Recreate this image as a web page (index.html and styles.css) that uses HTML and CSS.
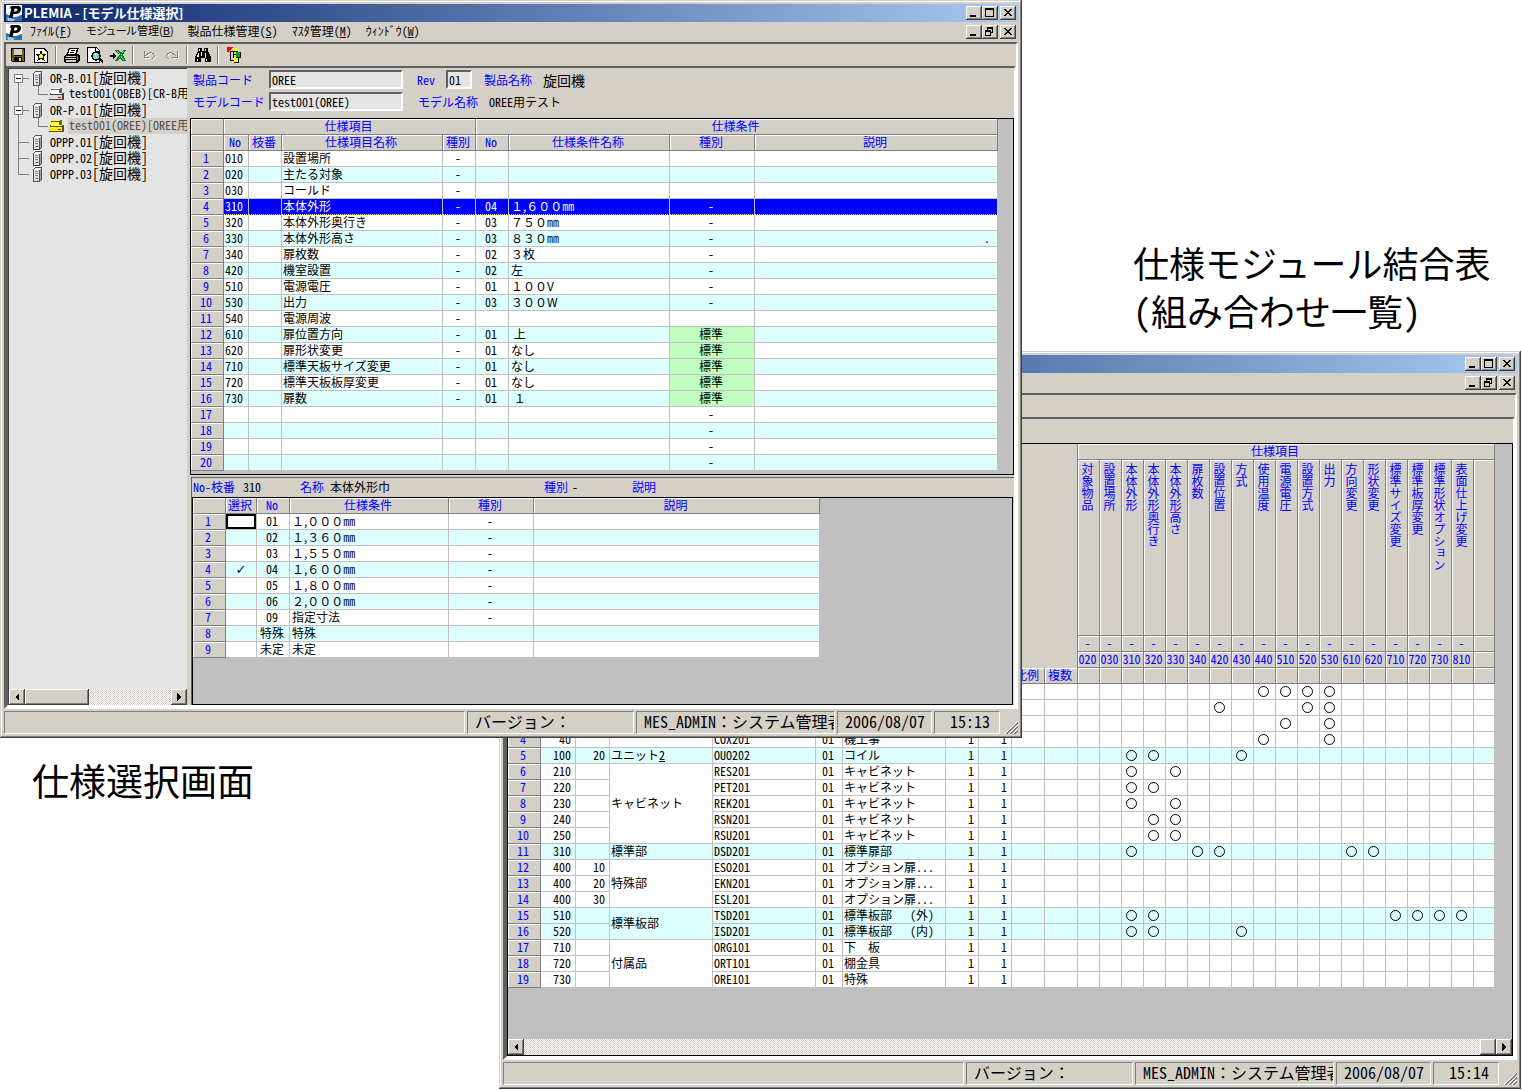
FILE: index.html
```html
<!DOCTYPE html>
<html lang="ja">
<head>
<meta charset="utf-8">
<title>PLEMIA</title>
<link rel="stylesheet" href="styles.css">
</head>
<body>
<svg class="defs" aria-hidden="true">
  <symbol id="i-logo" viewBox="0 0 16 16">
    <rect width="16" height="16" fill="#fff"/>
    <path d="M0 9c3 0 4 3 8 3s6-2 8-2v6H0z" fill="#2f6fa8"/>
    <path d="M1 13c3-2 5 2 9 1l-3 2H2z" fill="#9cc9e8"/>
    <path d="M5 1h6.500c3 0 4 2 3.300 4.500S12 9 9.500 9H7.500l-1 4H3L5.300 3.500H3.500zM8.600 3.500L7.900 6.500H9.500c2.200 0 2.700-3 .6-3z" fill="#000" fill-rule="evenodd"/>
  </symbol>
  <symbol id="i-min" viewBox="0 0 12 10"><path d="M2 7h6v2H2z"/></symbol>
  <symbol id="i-max" viewBox="0 0 12 10"><path d="M1 0h9v9H1zM2 2v6h7V2z" fill-rule="evenodd"/></symbol>
  <symbol id="i-restore" viewBox="0 0 12 10"><path d="M3 0h6v6H7v3H1V3h2zM4 2v1h3v2h1V2zM2 5v3h4V5z" fill-rule="evenodd"/></symbol>
  <symbol id="i-close" viewBox="0 0 12 10"><path d="M2 1h2v1h1v1h2V2h1V1h2v1H9v1H8v1H7v1h1v1h1v1h1v1H8V7H7V6H5v1H4v1H2V7h1V6h1V5h1V4H4V3H3V2H2z"/></symbol>
  <symbol id="i-save" viewBox="0 0 16 16">
    <path d="M1 1h14v14H2l-1-1z" fill="#000"/><path d="M2 2h2v7h8V2h2v12H2z" fill="#6b6b00"/><path d="M4 2h8v6H4z" fill="#d4d0c8"/><path d="M4 10h8v5H4z" fill="#000"/><path d="M9 11h2v3H9z" fill="#d4d0c8"/>
  </symbol>
  <symbol id="i-star" viewBox="0 0 16 16">
    <path d="M1 1h10l4 4v11H1z" fill="#000"/><path d="M2 2h8v4h4v9H2z" fill="#fff"/><path d="M10 2l4 4h-4z" fill="#fff"/>
    <path d="M8 4l1 3h4l-3 2 1 4-3-2-3 2 1-4-3-2h4z" fill="#ff0" stroke="#000" stroke-width="1"/>
  </symbol>
  <symbol id="i-print" viewBox="0 0 16 16">
    <path d="M5 1h10l-2 6h2v1l1 1v4l-3 3H1l-1-1V9l3-3z" fill="#000"/><path d="M6 2h7l-2 5H4z" fill="#fff"/><path d="M7 3h4v1H6zM6 5h4v1H5z" fill="#000"/><path d="M2 9h10v1H2zM1 11h11v1H1zM2 13h10v2H2z" fill="#d4d0c8"/><path d="M7 11h3v1H7z" fill="#ff0"/><path d="M13 9h1v4h-1z" fill="#888"/>
  </symbol>
  <symbol id="i-preview" viewBox="0 0 16 16">
    <path d="M0 0h9l4 4v12H0z" fill="#000"/><path d="M1 1h7v4h4v10H1z" fill="#fff"/><path d="M9 1v3h3z" fill="#fff"/><circle cx="9" cy="9" r="4" fill="#7fd8d8" stroke="#000" stroke-width="1.500"/><path d="M8 6h2l-2 3z" fill="#fff"/><path d="M11 11l1-1 4 4v2h-1z" fill="#000"/>
  </symbol>
  <symbol id="i-excel" viewBox="0 0 16 16">
    <path d="M0 8h3V6l3 3-3 3v-2H0z" fill="#000"/><path d="M5 3h4l2 3 2-3h3l-3 5 3 6h-4l-2-3-2 3H5l4-6z" fill="#087a20"/><path d="M7 4h1l6 9h-1zM14 4h-1l-5 9" fill="#8bd08b"/>
  </symbol>
  <symbol id="i-undo" viewBox="0 0 16 16"><path d="M3 4v6h5M3.500 9.500L7 6.500q3-2 5 0 3 3-1 5.500" fill="none" stroke="#fff" transform="translate(1 1)"/><path d="M3 4v6h5M3.500 9.500L7 6.500q3-2 5 0 3 3-1 5.500" fill="none" stroke="#808080"/></symbol>
  <symbol id="i-redo" viewBox="0 0 16 16"><path d="M13 4v6H8M12.500 9.500L9 6.500q-3-2-5 0-3 3 1 5.500" fill="none" stroke="#fff" transform="translate(1 1)"/><path d="M13 4v6H8M12.500 9.500L9 6.500q-3-2-5 0-3 3 1 5.500" fill="none" stroke="#808080"/></symbol>
  <symbol id="i-find" viewBox="0 0 16 16">
    <path d="M3 1h4v3h2V1h4v3l3 6v5h-6v-4H6v4H0v-5l3-6z" fill="#000"/><path d="M4 2h1v2H4zM10 2h1v2h-1zM3 6h1v4H2zM6 5h1v4H6zM10 6h1v5h-1zM2 12h1v2H2zM11 12h1v2h-1z" fill="#fff"/>
  </symbol>
  <symbol id="i-map" viewBox="0 0 16 16">
    <path d="M1 0h6L2 5H1z" fill="#f00"/><path d="M4 4h1v9h3v1H4zM5 4h3v1H5zM7 7h3v1H7zM7 5h1v6H7z" fill="#000"/><path d="M8 1h4v4H8zM8 11h5v5H8z" fill="#000"/><path d="M8 1h4v3H8zM8 11h4v4H8z" fill="#ff0"/><path d="M10 5h5v6h-5z" fill="#000"/><path d="M10 5h4v5h-4z" fill="#0a0"/>
  </symbol>
  <symbol id="i-server" viewBox="0 0 10 15">
    <path d="M0 2h1V1h1V0h7v13H8v1H7v1H0z" fill="#505050"/>
    <path d="M1 3h5v11H1z" fill="#e0e0e0"/><path d="M2 1h6v1H2zM1 2h6v1H1z" fill="#fff"/><path d="M7 2h1v11H7z" fill="#a0a0a0"/>
    <path d="M2 4h3v1H2zM2 6h3v1H2zM2 8h3v1H2z" fill="#909090"/><path d="M3 11h2v1H3z" fill="#e00"/>
  </symbol>
  <symbol id="i-drive" viewBox="0 0 16 14">
    <path d="M2 3l2-2h9l1 1v5H2z" fill="#666"/><path d="M2 3h9v3H2zM4 1h8v1H4z" fill="#fff"/>
    <path d="M1 8l2-2h12l1 1v5l-1 1H1z" fill="#444"/><path d="M1 8h13v4H1z" fill="#ddd"/><path d="M3 6h11v1H3z" fill="#fff"/><path d="M10 10h3v1h-3z" fill="#e00"/>
  </symbol>
  <symbol id="i-drive-on" viewBox="0 0 16 14">
    <path d="M2 3l2-2h9l1 1v5H2z" fill="#660"/><path d="M2 3h9v3H2zM4 1h8v1H4z" fill="#ff3"/>
    <path d="M1 8l2-2h12l1 1v5l-1 1H1z" fill="#550"/><path d="M1 8h13v4H1z" fill="#fe0"/><path d="M3 6h11v1H3z" fill="#ffa"/><path d="M10 10h3v1h-3z" fill="#e00"/>
  </symbol>
  <symbol id="b-root" viewBox="0 0 24 16"><path d="M9.500 8v8M14 8.500h6" stroke="#808080"/><path d="M5.500 4.500h8v8h-8z" fill="#fff" stroke="#808080"/><path d="M7 8.500h5" stroke="#000"/></symbol>
  <symbol id="b-mid" viewBox="0 0 24 16"><path d="M9.500 0v16M14 8.500h6" stroke="#808080"/><path d="M5.500 4.500h8v8h-8z" fill="#fff" stroke="#808080"/><path d="M7 8.500h5" stroke="#000"/></symbol>
  <symbol id="b-child" viewBox="0 0 39 16"><path d="M9.500 0v16M29.500 0v8.500H39" fill="none" stroke="#808080"/></symbol>
  <symbol id="b-leaf" viewBox="0 0 24 16"><path d="M9.500 0v16M10 8.500h10" stroke="#808080"/></symbol>
  <symbol id="b-last" viewBox="0 0 24 16"><path d="M9.500 0v8.500H20" fill="none" stroke="#808080"/></symbol>
  <symbol id="i-left" viewBox="0 0 8 8"><path d="M6 0v8L2 4z"/></symbol>
  <symbol id="i-right" viewBox="0 0 8 8"><path d="M2 0v8l4-4z"/></symbol>
  <symbol id="i-grip" viewBox="0 0 14 14"><path d="M2 14L14 2M6 14l8-8M10 14l4-4" stroke="#808080" stroke-width="2"/><path d="M1 14L14 1M5 14l9-9M9 14l5-5" stroke="#fff"/></symbol>
</svg>

<main class="desktop">
  <section class="window window-select">
    <header class="titlebar">
      <svg class="logo"><use href="#i-logo"/></svg>
      <h1 class="title">PLEMIA - [モデル仕様選択]</h1>
      <div class="controls">
        <button class="ctl" aria-label="最小化"><svg><use href="#i-min"/></svg></button>
        <button class="ctl" aria-label="最大化"><svg><use href="#i-max"/></svg></button>
        <button class="ctl ctl-close" aria-label="閉じる"><svg><use href="#i-close"/></svg></button>
      </div>
    </header>
    <nav class="menubar">
      <svg class="logo"><use href="#i-logo"/></svg>
      <div class="menus">
        <button class="menu">ﾌｧｲﾙ(<u>F</u>)</button>
        <button class="menu menu-kana">モジュール管理(<u>B</u>)</button>
        <button class="menu">製品仕様管理(<u>S</u>)</button>
        <button class="menu">ﾏｽﾀ管理(<u>M</u>)</button>
        <button class="menu">ｳｨﾝﾄﾞｳ(<u>W</u>)</button>
      </div>
      <div class="controls">
        <button class="ctl" aria-label="最小化"><svg><use href="#i-min"/></svg></button>
        <button class="ctl" aria-label="元に戻す"><svg><use href="#i-restore"/></svg></button>
        <button class="ctl ctl-close" aria-label="閉じる"><svg><use href="#i-close"/></svg></button>
      </div>
    </nav>
    <div class="client">
      <div class="toolbar">
        <button class="tool" aria-label="保存"><svg><use href="#i-save"/></svg></button>
        <button class="tool" aria-label="新規"><svg><use href="#i-star"/></svg></button>
        <span class="sep"></span>
        <button class="tool" aria-label="印刷"><svg><use href="#i-print"/></svg></button>
        <button class="tool" aria-label="プレビュー"><svg><use href="#i-preview"/></svg></button>
        <button class="tool" aria-label="Excel出力"><svg><use href="#i-excel"/></svg></button>
        <span class="sep"></span>
        <button class="tool" aria-label="元に戻す"><svg><use href="#i-undo"/></svg></button>
        <button class="tool" aria-label="やり直し"><svg><use href="#i-redo"/></svg></button>
        <span class="sep"></span>
        <button class="tool" aria-label="検索"><svg><use href="#i-find"/></svg></button>
        <span class="sep"></span>
        <button class="tool" aria-label="構成"><svg><use href="#i-map"/></svg></button>
      </div>
      <div class="mdi split">
        <aside class="tree-pane">
          <ul class="tree">
            <li><svg class="branch"><use href="#b-root"/></svg><svg class="server"><use href="#i-server"/></svg><span class="node">OR-B.01<span class="big">[旋回機]</span></span></li>
            <li><svg class="branch branch-child"><use href="#b-child"/></svg><svg class="drive"><use href="#i-drive"/></svg><span class="node node-child">test001(OBEB)[CR-B用</span></li>
            <li><svg class="branch"><use href="#b-mid"/></svg><svg class="server"><use href="#i-server"/></svg><span class="node">OR-P.01<span class="big">[旋回機]</span></span></li>
            <li><svg class="branch branch-child"><use href="#b-child"/></svg><svg class="drive"><use href="#i-drive-on"/></svg><span class="node node-child node-on">test001(OREE)[OREE用</span></li>
            <li><svg class="branch"><use href="#b-leaf"/></svg><svg class="server"><use href="#i-server"/></svg><span class="node">OPPP.01<span class="big">[旋回機]</span></span></li>
            <li><svg class="branch"><use href="#b-leaf"/></svg><svg class="server"><use href="#i-server"/></svg><span class="node">OPPP.02<span class="big">[旋回機]</span></span></li>
            <li><svg class="branch"><use href="#b-last"/></svg><svg class="server"><use href="#i-server"/></svg><span class="node">OPPP.03<span class="big">[旋回機]</span></span></li>
          </ul>
          <div class="scrollbar">
            <button class="arrow" aria-label="左へ"><svg><use href="#i-left"/></svg></button>
            <span class="thumb thumb-tree"></span>
            <span class="track"></span>
            <button class="arrow" aria-label="右へ"><svg><use href="#i-right"/></svg></button>
          </div>
        </aside>
        <div class="detail">
          <form class="form">
            <div class="form-row">
              <label class="code-label" for="product">製品コード</label>
              <input class="field code-field" id="product" value="OREE">
              <label class="rev-label" for="rev">Rev</label>
              <input class="field rev-field" id="rev" value="01">
              <span class="caption product-name">製品名称</span><span class="big">旋回機</span>
            </div>
            <div class="form-row">
              <label class="code-label" for="model">モデルコード</label>
              <input class="field code-field" id="model" value="test001(OREE)">
              <span class="caption model-name">モデル名称</span><span>OREE用テスト</span>
            </div>
          </form>
          <div class="grid grid-spec">
            <table class="sheet sheet-spec">
              <colgroup><col class="w33"><col class="w25"><col class="w33"><col class="w161"><col class="w33"><col class="w33"><col class="w161"><col class="w85"><col></colgroup>
              <thead>
                <tr><th></th><th colspan="4">仕様項目</th><th colspan="4">仕様条件</th></tr>
                <tr><th></th><th>No</th><th>枝番</th><th>仕様項目名称</th><th>種別</th><th>No</th><th>仕様条件名称</th><th>種別</th><th>説明</th></tr>
              </thead>
              <tbody id="spec-rows"></tbody>
            </table>
          </div>
          <div class="lower">
            <div class="info">
              <span class="caption">No-枝番</span><span>310</span>
              <span class="caption">名称</span><span>本体外形巾</span>
              <span class="caption">種別</span><span>-</span>
              <span class="caption">説明</span>
            </div>
            <div class="grid grid-option">
              <table class="sheet sheet-option">
                <colgroup><col class="w33"><col class="w31"><col class="w33"><col class="w159"><col class="w85"><col class="w286"></colgroup>
                <thead>
                  <tr><th></th><th>選択</th><th>No</th><th>仕様条件</th><th>種別</th><th>説明</th></tr>
                </thead>
                <tbody id="option-rows"></tbody>
              </table>
            </div>
          </div>
        </div>
      </div>
    </div>
    <footer class="status">
      <span class="cell cell-main"></span>
      <span class="cell cell-version">バージョン<span class="wide">：</span></span>
      <span class="cell cell-user">MES_ADMIN<span class="wide">：</span>システム管理者</span>
      <span class="cell cell-date">2006/08/07</span>
      <span class="cell cell-time">15:13</span>
      <svg class="grip"><use href="#i-grip"/></svg>
    </footer>
  </section>

  <section class="window window-matrix">
    <header class="titlebar">
      <div class="controls">
        <button class="ctl" aria-label="最小化"><svg><use href="#i-min"/></svg></button>
        <button class="ctl" aria-label="最大化"><svg><use href="#i-max"/></svg></button>
        <button class="ctl ctl-close" aria-label="閉じる"><svg><use href="#i-close"/></svg></button>
      </div>
    </header>
    <nav class="menubar">
      <div class="controls">
        <button class="ctl" aria-label="最小化"><svg><use href="#i-min"/></svg></button>
        <button class="ctl" aria-label="元に戻す"><svg><use href="#i-restore"/></svg></button>
        <button class="ctl ctl-close" aria-label="閉じる"><svg><use href="#i-close"/></svg></button>
      </div>
    </nav>
    <div class="client">
      <div class="toolbar"></div>
      <div class="mdi">
        <div class="band"></div>
        <div class="grid grid-matrix">
          <table class="sheet sheet-matrix">
            <colgroup><col class="w33"><col class="w35"><col class="w34"><col class="w103"><col class="w103"><col class="w27"><col class="w103"><col class="w33" span="4"><col class="w22" span="18"><col></colgroup>
            <thead id="matrix-head"></thead>
            <tbody id="matrix-rows"></tbody>
          </table>
          <div class="scrollbar">
            <button class="arrow" aria-label="左へ"><svg><use href="#i-left"/></svg></button>
            <span class="track"></span>
            <span class="thumb thumb-matrix"></span>
            <button class="arrow" aria-label="右へ"><svg><use href="#i-right"/></svg></button>
          </div>
        </div>
      </div>
    </div>
    <footer class="status">
      <span class="cell cell-main"></span>
      <span class="cell cell-version">バージョン<span class="wide">：</span></span>
      <span class="cell cell-user">MES_ADMIN<span class="wide">：</span>システム管理者</span>
      <span class="cell cell-date">2006/08/07</span>
      <span class="cell cell-time">15:14</span>
      <svg class="grip"><use href="#i-grip"/></svg>
    </footer>
  </section>

  <h2 class="note note-matrix">仕様モジュール結合表<br>(組み合わせ一覧)</h2>
  <h2 class="note note-select">仕様選択画面</h2>
</main>
<script src="script.js"></script>
</body>
</html>
```
FILE: styles.css
```css
* { box-sizing: border-box; }
body {
  margin: 0;
  background: #fff;
  color: #000;
  font: 12px/15px "Noto Sans CJK JP", sans-serif;
  font-feature-settings: "hwid";
}
button, input { font: inherit; font-feature-settings: inherit; color: inherit; margin: 0; padding: 0; border: 0; background: none; }
svg { display: block; flex: none; shape-rendering: crispEdges; }
.defs { display: none; }
.big { font-size: 14px; line-height: 14px; }
.wide { font-feature-settings: normal; }
.caption, label { color: #00f; }

/* Desktop: two overlapping windows with a note beside each */
.desktop {
  display: grid;
  grid-template-columns: 499px minmax(0, 1fr) 499px 1px;
  grid-template-rows: 351px 387px auto;
  align-items: start;
}
.window {
  padding: 4px;
  background: #d4d0c8;
  box-shadow: inset -1px -1px #404040, inset 1px 1px #d4d0c8, inset -2px -2px #808080, inset 2px 2px #fff;
}
.window-select { grid-area: 1 / 1 / 3 / 3; z-index: 1; }
.window-matrix { grid-area: 2 / 2 / 4 / 4; }
.note { margin: 0; font-weight: 400; white-space: nowrap; }
.note-matrix { grid-area: 1 / 3; align-self: end; padding: 0 0 17px 111px; font-size: 36px; line-height: 48px; }
.note-select { grid-area: 3 / 1; padding: 18px 0 0 32px; font-size: 37px; line-height: 48px; }

/* Title bar and menu */
.titlebar, .menubar { display: flex; align-items: center; padding: 0 2px; }
.titlebar { height: 18px; background: linear-gradient(90deg, #0a246a, #a6caf0); }
.menubar { height: 20px; }
.logo { width: 16px; height: 16px; shape-rendering: auto; }
.title { margin: 0 0 0 2px; font-size: 13px; line-height: 18px; color: #fff; font-feature-settings: normal; }
.controls { display: flex; margin-left: auto; }
.ctl {
  display: grid;
  place-items: center;
  width: 16px;
  height: 14px;
  background: #d4d0c8;
  box-shadow: inset -1px -1px #404040, inset 1px 1px #fff, inset -2px -2px #808080;
}
.ctl svg { width: 12px; height: 10px; }
.ctl-close { margin-left: 2px; }
.menus { display: flex; gap: 14px; margin-left: 8px; padding-bottom: 3px; }
.menu-kana { font-size: 11px; font-feature-settings: "palt"; }

/* Client area */
.client, .mdi { border: 2px solid; border-color: #606060 #fff #fff #606060; }
.toolbar { display: flex; align-items: center; height: 22px; }
.tool { display: grid; place-items: center; width: 23px; height: 22px; }
.tool svg { width: 16px; height: 16px; }
.sep { width: 2px; height: 18px; margin: 0 3px; border-left: 1px solid #808080; border-right: 1px solid #fff; }
.split { display: flex; }
.tree-pane {
  display: flex;
  flex-direction: column;
  flex: none;
  width: 179px;
  margin-right: 3px;
  background: #e4e4e4;
  border: 1px solid #404040;
  border-width: 1px 0 0 1px;
}
.tree { flex: 1; margin: 0; padding: 1px 0 0; list-style: none; overflow-x: clip; }
.tree li { display: flex; align-items: center; height: 16px; white-space: nowrap; }
.branch { width: 24px; height: 16px; }
.branch-child { width: 39px; }
.server { width: 10px; height: 15px; }
.drive { width: 16px; height: 14px; }
.node { flex: 1; height: 16px; padding-left: 7px; line-height: 14px; }
.node-child { margin-left: 4px; padding-left: 1px; }
.node-on { background: #d4d0c8; color: #505050; }
.scrollbar { display: flex; height: 16px; }
.arrow, .thumb { flex: none; width: 16px; background: #d4d0c8; box-shadow: inset -1px -1px #404040, inset 1px 1px #fff, inset -2px -2px #808080; }
.arrow { display: grid; place-items: center; }
.arrow svg { width: 8px; height: 8px; }
.thumb-tree { width: 64px; }
.track { flex: 1; background: conic-gradient(#fff 25%, #d4d0c8 0 50%, #fff 0 75%, #d4d0c8 0) 0 0 / 2px 2px; }

/* Form */
.detail { flex: 1; min-width: 0; }
.form { display: grid; gap: 3px; padding: 2px 0 7px 3px; }
.form-row { display: flex; align-items: center; height: 19px; white-space: nowrap; }
.code-label { width: 76px; }
.field { height: 19px; padding: 0 1px; background: #e4e4e4; border: 2px solid; border-color: #606060 #fff #fff #606060; }
.code-field { width: 134px; }
.rev-label { width: 43px; padding-left: 14px; }
.rev-field { width: 26px; }
.product-name { width: 71px; padding-left: 12px; }
.model-name { width: 86px; padding-left: 15px; }

/* Grids */
.grid { background: #c0c0c0; border: 1px solid #000; }
.grid-spec { padding: 0 15px 3px 0; }
.sheet { table-layout: fixed; border-collapse: separate; border-spacing: 0; }
.sheet-spec, .sheet-matrix { width: 100%; }
.sheet-option { width: 627px; }
.w22 { width: 22px; } .w25 { width: 25px; } .w27 { width: 27px; } .w31 { width: 31px; }
.w33 { width: 33px; } .w34 { width: 34px; } .w35 { width: 35px; } .w85 { width: 85px; }
.w103 { width: 103px; } .w159 { width: 159px; } .w161 { width: 161px; } .w286 { width: 286px; }
.sheet th, .sheet td { height: 16px; padding: 0 2px 2px 0; line-height: 13px; white-space: nowrap; }
.sheet th {
  background: #d4d0c8;
  color: #00f;
  font-weight: 400;
  border: 1px solid #808080;
  border-width: 0 1px 1px 0;
  box-shadow: inset 1px 1px #fff;
}
.sheet td { background: #fff; border: 1px solid #c0c0c0; border-width: 0 1px 1px 0; padding-left: 1px; }
.sheet .alt td { background: #dff; }
.sheet .mid { padding-left: 0; text-align: center; }
.sheet .num { padding-right: 4px; text-align: right; }
.sheet .end { padding-right: 7px; text-align: right; }
.sheet .full { padding-left: 2px; font-feature-settings: normal; }
.sheet td.std, .sheet .alt td.std { background: #c0ffc0; }
.sheet .picked td { background: #00f; color: #fff; border-bottom: 1px dotted #ff0; }
.lower { margin: 2px 0 0 1px; padding-right: 1px; border: 1px solid #606060; border-width: 1px 0 0 1px; }
.info { display: grid; grid-template-columns: 50px 57px 30px 214px 28px 60px 1fr; height: 19px; padding-left: 1px; line-height: 17px; white-space: nowrap; }
.grid-option { padding-bottom: 46px; }
.sheet .pick { padding: 0; }
.check { display: block; appearance: none; width: 100%; height: 15px; text-align: center; color: #000080; }
.check:checked::before { content: "✓"; font: 700 13px/15px "DejaVu Sans", sans-serif; }
.check-focus { border: 2px solid #000; }

/* Matrix */
.band { height: 24px; }
.grid-matrix .sheet { width: calc(100% - 17px); margin-bottom: 51px; }
.sheet .blank { box-shadow: none; border-bottom: 0; }
.sheet .group { padding-right: 22px; }
.sheet .tall { height: 176px; padding: 3px 0 0 1px; vertical-align: top; }
.tall span { display: block; width: 16px; line-height: 16px; writing-mode: vertical-rl; font-feature-settings: normal; }
.circle { display: block; width: 11px; height: 11px; margin: 2px auto 0; border: 1px solid #000; border-radius: 50%; }

/* Status bar */
.status { display: flex; gap: 2px; padding-top: 2px; height: 25px; font-size: 16px; line-height: 19px; }
.cell { padding: 0 7px; border: 1px solid; border-color: #808080 #fff #fff #808080; white-space: nowrap; overflow-x: clip; }
.cell-main { flex: 1; }
.cell-version { width: 167px; }
.cell-user { width: 199px; padding-right: 0; }
.cell-date { width: 95px; }
.cell-time { width: 66px; padding-right: 9px; text-align: right; }
.grip { align-self: end; width: 14px; height: 14px; margin-left: 2px; }
```
FILE: script.js
```js
// [No, item name, condition No, condition name, kind, remark]
const spec = [
  ["010", "設置場所", "", "", ""],
  ["020", "主たる対象", "", "", ""],
  ["030", "コールド", "", "", ""],
  ["310", "本体外形", "04", "１,６００㎜", "-"],
  ["320", "本体外形奥行き", "03", "７５０㎜", "-"],
  ["330", "本体外形高さ", "03", "８３０㎜", "-", "."],
  ["340", "扉枚数", "02", "３枚", "-"],
  ["420", "機室設置", "02", "左", "-"],
  ["510", "電源電圧", "01", "１００V", "-"],
  ["530", "出力", "03", "３００W", "-"],
  ["540", "電源周波", "", "", ""],
  ["610", "扉位置方向", "01", "&nbsp;上", "標準"],
  ["620", "扉形状変更", "01", "なし", "標準"],
  ["710", "標準天板サイズ変更", "01", "なし", "標準"],
  ["720", "標準天板板厚変更", "01", "なし", "標準"],
  ["730", "扉数", "01", "&nbsp;１", "標準"],
  ["", "", "", "", "-"],
  ["", "", "", "", "-"],
  ["", "", "", "", "-"],
  ["", "", "", "", "-"]
];
document.getElementById("spec-rows").innerHTML = spec.map((r, i) => {
  const cls = i === 3 ? "picked" : i % 2 ? "alt" : "";
  const std = r[4] === "標準" ? " std" : "";
  return `<tr class="${cls}"><th>${i + 1}</th><td>${r[0]}</td><td></td><td>${r[1]}</td>` +
    `<td class="mid">${r[0] ? "-" : ""}</td><td class="mid">${r[2]}</td><td class="full">${r[3]}</td>` +
    `<td class="mid${std}">${r[4]}</td><td class="end">${r[5] || ""}</td></tr>`;
}).join("");

const options = [
  ["01", "１,０００㎜"], ["02", "１,３６０㎜"], ["03", "１,５５０㎜"],
  ["04", "１,６００㎜"], ["05", "１,８００㎜"], ["06", "２,０００㎜"],
  ["09", "指定寸法"], ["特殊", "特殊"], ["未定", "未定"]
];
document.getElementById("option-rows").innerHTML = options.map((r, i) =>
  `<tr class="${i % 2 ? "alt" : ""}"><th>${i + 1}</th>` +
  `<td class="pick"><input type="checkbox" class="check${i ? "" : " check-focus"}" aria-label="選択 ${r[0]}"${i === 3 ? " checked" : ""}></td>` +
  `<td class="mid">${r[0]}</td><td class="full">${r[1]}</td><td class="mid">${i < 7 ? "-" : ""}</td><td></td></tr>`
).join("");

const items = [
  ["020", "対象物品"], ["030", "設置場所"], ["310", "本体外形"], ["320", "本体外形奥行き"],
  ["330", "本体外形高さ"], ["340", "扉枚数"], ["420", "設置位置"], ["430", "方式"],
  ["440", "使用温度"], ["510", "電源電圧"], ["520", "設置方式"], ["530", "出力"],
  ["610", "方向変更"], ["620", "形状変更"], ["710", "標準サイズ変更"], ["720", "標準板厚変更"],
  ["730", "標準形状オプション"], ["810", "表面仕上げ変更"], ["", ""]
];
const headRow = fn => `<tr>${items.map(fn).join("")}</tr>`;
document.getElementById("matrix-head").innerHTML =
  `<tr><th class="blank" colspan="11" rowspan="4"></th><th class="group" colspan="19">仕様項目</th></tr>` +
  headRow(c => `<th class="tall"><span>${c[1]}</span></th>`) +
  headRow(c => `<th>${c[0] ? "-" : ""}</th>`) +
  headRow(c => `<th>${c[0]}</th>`) +
  `<tr>${"<th></th>".repeat(9)}<th>比例</th><th>複数</th>${"<th></th>".repeat(19)}</tr>`;

// [No, sub No, unit name, unit row span (0 = covered from above), code, rev, name, linked items]
const matrix = [
  ["", "", "", 1, "", "", "", "440 510 520 530"],
  ["", "", "", 1, "", "", "", "420 520 530"],
  ["", "", "", 1, "", "", "", "510 530"],
  ["40", "", "", 1, "COX201", "01", "機工事", "440 530"],
  ["100", "20", "ユニット<u>2</u>", 1, "OUO202", "01", "コイル", "310 320 430"],
  ["210", "", "キャビネット", 5, "RES201", "01", "キャビネット", "310 330"],
  ["220", "", "", 0, "PET201", "01", "キャビネット", "310 320"],
  ["230", "", "", 0, "REK201", "01", "キャビネット", "310 330"],
  ["240", "", "", 0, "RSN201", "01", "キャビネット", "320 330"],
  ["250", "", "", 0, "RSU201", "01", "キャビネット", "320 330"],
  ["310", "", "標準部", 1, "DSD201", "01", "標準扉部", "310 340 420 610 620"],
  ["400", "10", "特殊部", 3, "ESO201", "01", "オプション扉...", ""],
  ["400", "20", "", 0, "EKN201", "01", "オプション扉...", ""],
  ["400", "30", "", 0, "ESL201", "01", "オプション扉...", ""],
  ["510", "", "標準板部", 2, "TSD201", "01", '標準板部<span class="wide">　</span> (外)', "310 320 710 720 730 810"],
  ["520", "", "", 0, "ISD201", "01", '標準板部<span class="wide">　</span> (内)', "310 320 430"],
  ["710", "", "付属品", 3, "ORG101", "01", '下<span class="wide">　</span>板', ""],
  ["720", "", "", 0, "ORT101", "01", "棚金具", ""],
  ["730", "", "", 0, "ORE101", "01", "特殊", ""]
];
const shaded = [5, 11, 15, 16];
document.getElementById("matrix-rows").innerHTML = matrix.map((r, i) => {
  const linked = r[7].split(" ");
  const unit = r[3] ? `<td rowspan="${r[3]}">${r[2]}</td>` : "";
  const one = r[0] ? "1" : "";
  const marks = items.map(c =>
    `<td class="mid">${c[0] && linked.includes(c[0]) ? '<span class="circle" role="img" aria-label="対象"></span>' : ""}</td>`
  ).join("");
  return `<tr class="${shaded.includes(i + 1) ? "alt" : ""}"><th>${r[0] ? i + 1 : ""}</th><td class="num">${r[0]}</td>` +
    `<td class="num">${r[1]}</td>${unit}<td>${r[4]}</td><td class="mid">${r[5]}</td><td>${r[6]}</td>` +
    `<td class="num">${one}</td><td class="num">${one}</td><td></td><td></td>${marks}</tr>`;
}).join("");
```
